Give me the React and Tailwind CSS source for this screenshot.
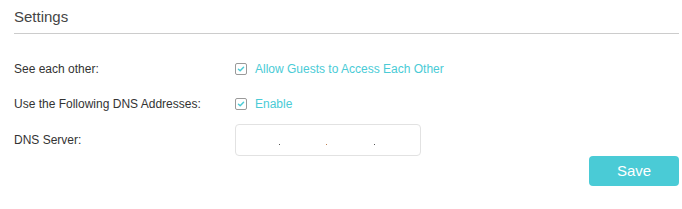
import React from 'react';

const Check = ({ label }) => (
  <label className="flex items-center gap-[8px] cursor-pointer">
    <span className="w-[12px] h-[12px] border border-[#9a9a9a] rounded-[2px] flex items-center justify-center bg-white">
      <svg viewBox="0 0 10 10" className="w-[8px] h-[8px]" fill="none" stroke="#4acbd6" strokeWidth="1.8" strokeLinecap="round" strokeLinejoin="round">
        <path d="M1.8 5.2 L4 7.2 L8.2 2.8" />
      </svg>
    </span>
    <span className="text-[#4acbd6]">{label}</span>
  </label>
);

export default function App() {
  return (
    <div className="w-[682px] h-[209px] bg-white pl-[14px] pr-[3px] text-[12px] text-[#333]" style={{ fontFamily: '"Liberation Sans", Arial, sans-serif' }}>
      <div className="pt-[7px] pb-[7px] border-b border-[#cccccc]">
        <h2 className="text-[15px] leading-[19px] text-[#454545]">Settings</h2>
      </div>

      <div className="mt-[26px] flex items-center h-[18px]">
        <div className="w-[221px]">See each other:</div>
        <Check label="Allow Guests to Access Each Other" />
      </div>

      <div className="mt-[17px] flex items-center h-[18px]">
        <div className="w-[221px]">Use the Following DNS Addresses:</div>
        <Check label="Enable" />
      </div>

      <div className="mt-[11px] flex items-center">
        <div className="w-[221px]">DNS Server:</div>
        <div className="w-[186px] h-[32px] border border-[#e2e2e2] rounded-[4px] flex items-center pt-[8px]">
          <span className="ml-[43px] w-[1px] h-[1px] bg-[#555]" />
          <span className="ml-[46px] w-[1px] h-[1px] bg-[#c08050]" />
          <span className="ml-[47px] w-[1px] h-[1px] bg-[#555]" />
        </div>
      </div>

      <div className="flex justify-end">
        <button className="w-[90px] h-[30px] bg-[#4acbd6] text-white text-[15px] rounded-[4px]">Save</button>
      </div>
    </div>
  );
}
